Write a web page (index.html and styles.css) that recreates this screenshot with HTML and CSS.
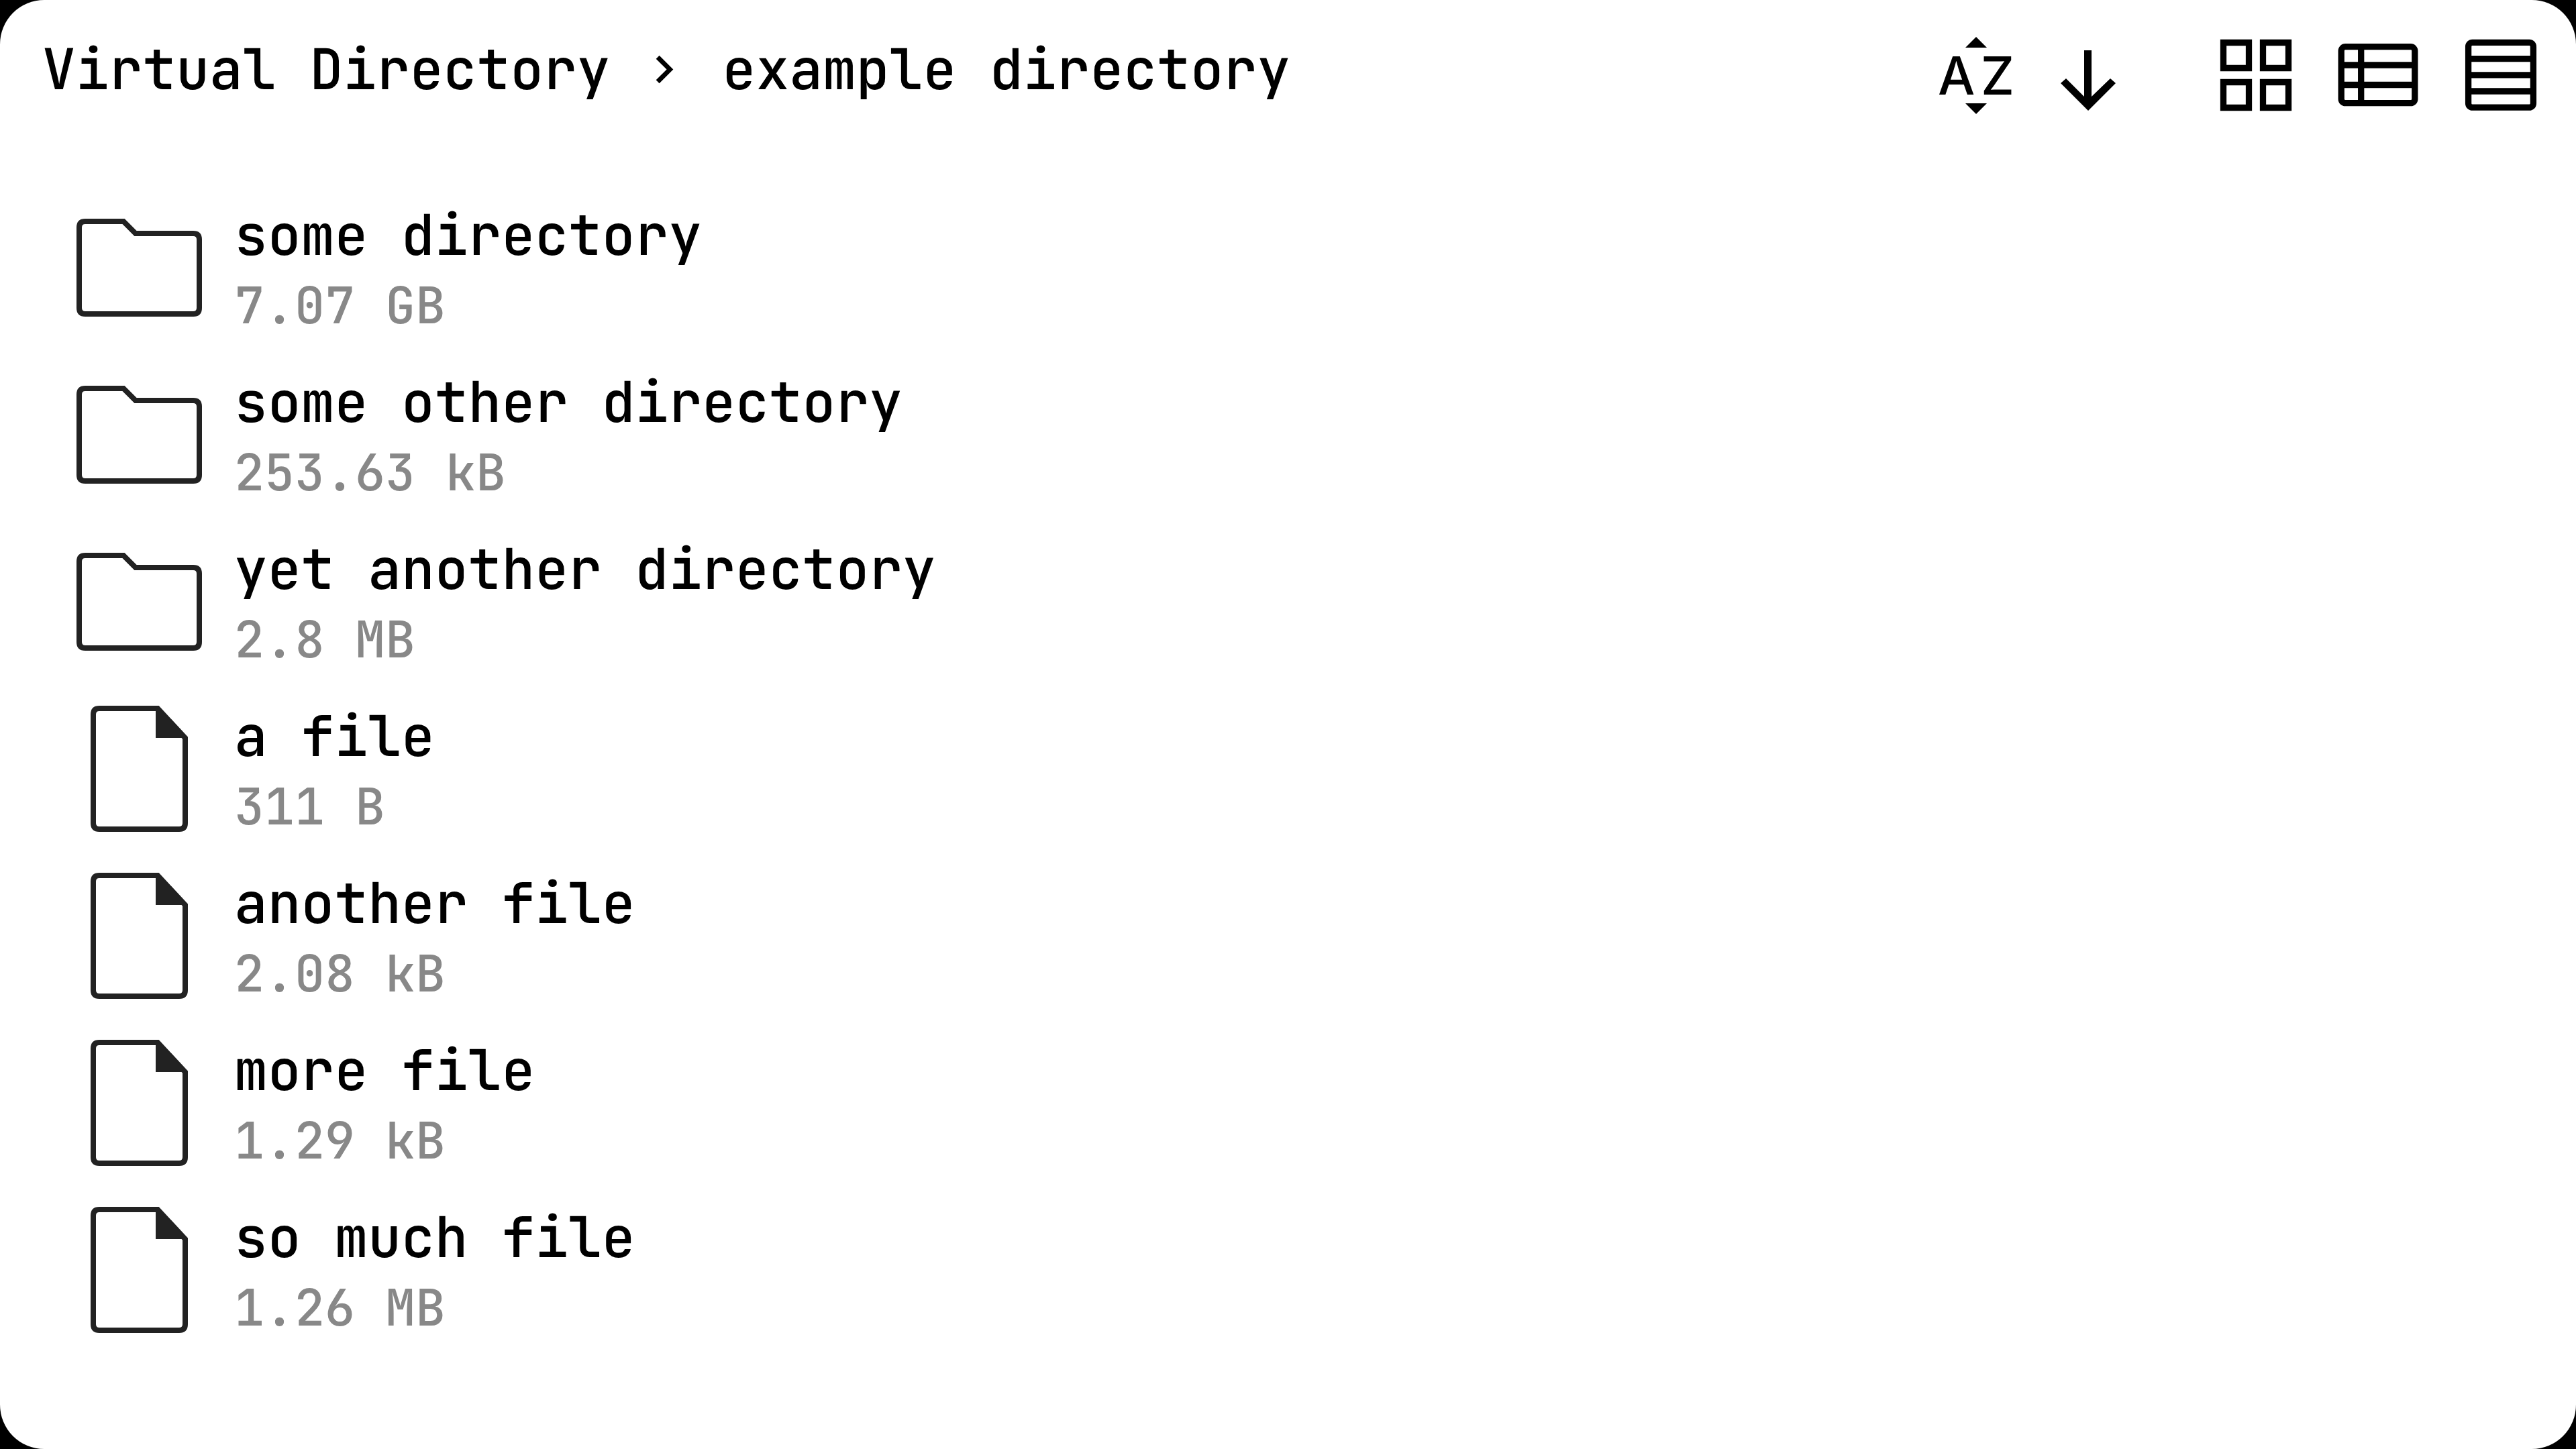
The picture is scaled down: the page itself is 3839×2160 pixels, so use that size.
FILE: index.html
```html
<!DOCTYPE html>
<html lang="en">
<head>
<meta charset="utf-8">
<title>Virtual Directory</title>
<link rel="stylesheet" href="styles.css">
</head>
<body>
<svg class="sprite" aria-hidden="true">
  <symbol id="folder" viewBox="0 0 188 188">
    <path d="M13 25H70L88 43H174Q183 43 183 52V154Q183 163 174 163H13Q4 163 4 154V34Q4 25 13 25Z" fill="none" stroke="currentColor" stroke-width="8"/>
  </symbol>
  <symbol id="file" viewBox="0 0 188 188">
    <path d="M34 4H121L162 48V175Q162 184 153 184H34Q25 184 25 175V13Q25 4 34 4Z" fill="none" stroke="currentColor" stroke-width="8"/>
    <path d="M118 4H123L165 48H118Z" fill="currentColor"/>
  </symbol>
</svg>
<main class="window">
  <header class="bar">
    <nav class="crumbs" aria-label="Path">
      <a href="#root">Virtual Directory</a>
      <svg class="sep" viewBox="0 0 24 24" aria-hidden="true"><path d="M10 6L8.59 7.41 13.17 12l-4.58 4.59L10 18l6-6z" fill="currentColor"/></svg>
      <a href="#example">example directory</a>
    </nav>
    <div class="tools">
      <div class="group sort">
        <button class="tool" type="button" aria-label="Sort by name">
          <svg viewBox="0 0 128 128">
            <path d="M64 7L80 23H48ZM48 106H80L64 122Z" fill="currentColor"/>
            <text class="letters" x="7" y="93">A</text>
            <text class="letters" x="71" y="93">Z</text>
          </svg>
        </button>
        <button class="tool" type="button" aria-label="Descending">
          <svg viewBox="0 0 128 128"><path d="M58 27H69V96L97 69L105 76L64 117L23 76L31 69L58 96Z" fill="currentColor"/></svg>
        </button>
      </div>
      <div class="group view">
        <button class="tool" type="button" aria-label="Grid view">
          <svg viewBox="0 0 128 128"><path d="M16.5 15.5h38v38h-38zM75.5 15.5h38v38h-38zM16.5 74.5h38v38h-38zM75.5 74.5h38v38h-38z" fill="none" stroke="currentColor" stroke-width="9.3"/></svg>
        </button>
        <button class="tool" type="button" aria-label="Detail view">
          <svg viewBox="0 0 128 128"><g fill="none" stroke="currentColor" stroke-width="9.3"><rect x="9.2" y="21.7" width="109.6" height="84" rx="6"/><path d="M38.7 22V106M9 49H119M9 78.5H119"/></g></svg>
        </button>
        <button class="tool" type="button" aria-label="List view">
          <svg viewBox="0 0 128 128"><g fill="none" stroke="currentColor" stroke-width="9.3"><rect x="15.6" y="15.4" width="96.8" height="96.8" rx="6"/><path d="M16 39.6H112M16 63.8H112M16 88H112"/></g></svg>
        </button>
      </div>
    </div>
  </header>
  <ul class="list">
    <li class="item"><svg class="icon"><use href="#folder"/></svg><div><a class="name" href="#1">some directory</a><div class="size">7.07 GB</div></div></li>
    <li class="item"><svg class="icon"><use href="#folder"/></svg><div><a class="name" href="#2">some other directory</a><div class="size">253.63 kB</div></div></li>
    <li class="item"><svg class="icon"><use href="#folder"/></svg><div><a class="name" href="#3">yet another directory</a><div class="size">2.8 MB</div></div></li>
    <li class="item"><svg class="icon"><use href="#file"/></svg><div><a class="name" href="#4">a file</a><div class="size">311 B</div></div></li>
    <li class="item"><svg class="icon"><use href="#file"/></svg><div><a class="name" href="#5">another file</a><div class="size">2.08 kB</div></div></li>
    <li class="item"><svg class="icon"><use href="#file"/></svg><div><a class="name" href="#6">more file</a><div class="size">1.29 kB</div></div></li>
    <li class="item"><svg class="icon"><use href="#file"/></svg><div><a class="name" href="#7">so much file</a><div class="size">1.26 MB</div></div></li>
  </ul>
</main>
</body>
</html>
```

FILE: styles.css
```css
* {
  box-sizing: border-box;
}

body {
  margin: 0;
  background: #000;
  color: #000;
  font-family: "JetBrains Mono", "DejaVu Sans Mono", monospace;
  font-size: 83px;
  font-weight: 500;
}

a {
  color: inherit;
  text-decoration: none;
}

.sprite {
  display: none;
}

.window {
  min-height: 100vh;
  background: #fff;
  border-radius: 66px;
}

.bar {
  display: flex;
  justify-content: space-between;
  align-items: flex-start;
  padding: 48px 48px 0 63px;
}

.crumbs {
  display: flex;
  align-items: center;
  gap: 38px;
  line-height: 111px;
  white-space: nowrap;
}

.sep {
  width: 83px;
  height: 83px;
  margin-right: 8px;
}

.tools {
  display: flex;
  gap: 121px;
}

.group {
  display: flex;
}

.sort {
  gap: 39px;
}

.view {
  gap: 55px;
}

.tool {
  width: 128px;
  height: 128px;
  padding: 0;
  border: 0;
  background: none;
  color: inherit;
  cursor: pointer;
}

.tool svg {
  display: block;
  width: 100%;
  height: 100%;
}

.letters {
  font: 500 78px Inter, sans-serif;
}

.list {
  display: flex;
  flex-direction: column;
  gap: 39px;
  margin: 0;
  padding: 118px 114px 48px;
  list-style: none;
}

.item {
  display: flex;
  align-items: center;
  gap: 47px;
}

.icon {
  flex: none;
  width: 188px;
  height: 188px;
  color: #222;
}

.name {
  display: block;
  line-height: 112px;
}

.size {
  color: #888;
  font-size: 75px;
  line-height: 98px;
}
```
